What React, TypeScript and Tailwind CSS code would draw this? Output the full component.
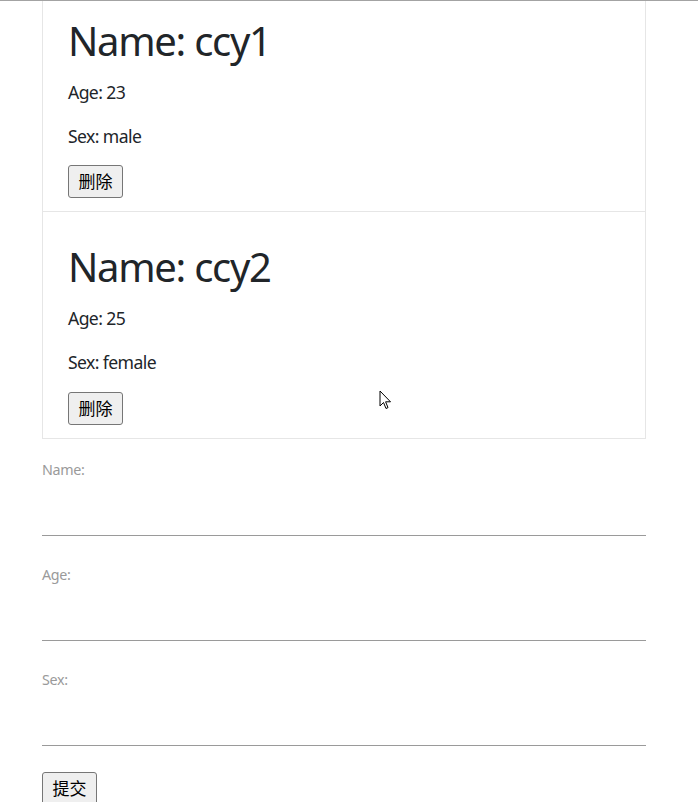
import React from "react";

const people = [
  { name: "ccy1", age: 23, sex: "male" },
  { name: "ccy2", age: 25, sex: "female" },
];

const font = { fontFamily: '"Noto Sans", "Noto Sans CJK SC", sans-serif' };

export default function App() {
  return (
    <div
      className="relative h-[802px] w-[698px] overflow-hidden bg-white border-t border-[#a3a3a3] text-[#212529]"
      style={font}
    >
      <div className="ml-[42px] w-[604px]">
        <div className="-mt-[16px] border border-[#e6e6e6] divide-y divide-[#e6e6e6]">
          {people.map((p) => (
            <div key={p.name} className="px-[25px] pt-[31px] pb-[13px]">
              <h1 className="text-[40px] leading-[48px] font-normal tracking-[-1.3px] mb-[14px]">
                Name: {p.name}
              </h1>
              <p className="text-[17.6px] leading-[26.4px] tracking-[-0.6px] mb-[17.6px]">Age: {p.age}</p>
              <p className="text-[17.6px] leading-[26.4px] tracking-[-0.6px] mb-[16px]">Sex: {p.sex}</p>
              <button className="h-[33px] w-[55px] text-[17px] leading-none bg-[#efefef] border border-[#767676] rounded-[3px] text-black">
                删除
              </button>
            </div>
          ))}
        </div>
        <form className="mt-[21px]">
          {["Name:", "Age:", "Sex:"].map((l) => (
            <div key={l} className="mb-[29px]">
              <label className="block text-[14.3px] leading-[20px] tracking-[-0.3px] text-[#9a9a9a]">{l}</label>
              <input className="block w-full h-[56px] border-b border-[#9a9a9a] outline-none bg-transparent" />
            </div>
          ))}
          <button
            type="button"
            className="-mt-[3px] h-[33px] w-[55px] text-[17px] leading-none bg-[#efefef] border border-[#767676] rounded-[3px] text-black"
          >
            提交
          </button>
        </form>
      </div>
      <svg
        className="absolute left-[379px] top-[389px]"
        width="13"
        height="21"
        viewBox="0 0 13 21"
      >
        <path
          d="M1 1 L1 16 L4.5 12.5 L7 18.5 L9 17.6 L6.6 11.8 L11.5 11.8 Z"
          fill="white"
          stroke="black"
          strokeWidth="1"
          strokeLinejoin="round"
        />
      </svg>
    </div>
  );
}
